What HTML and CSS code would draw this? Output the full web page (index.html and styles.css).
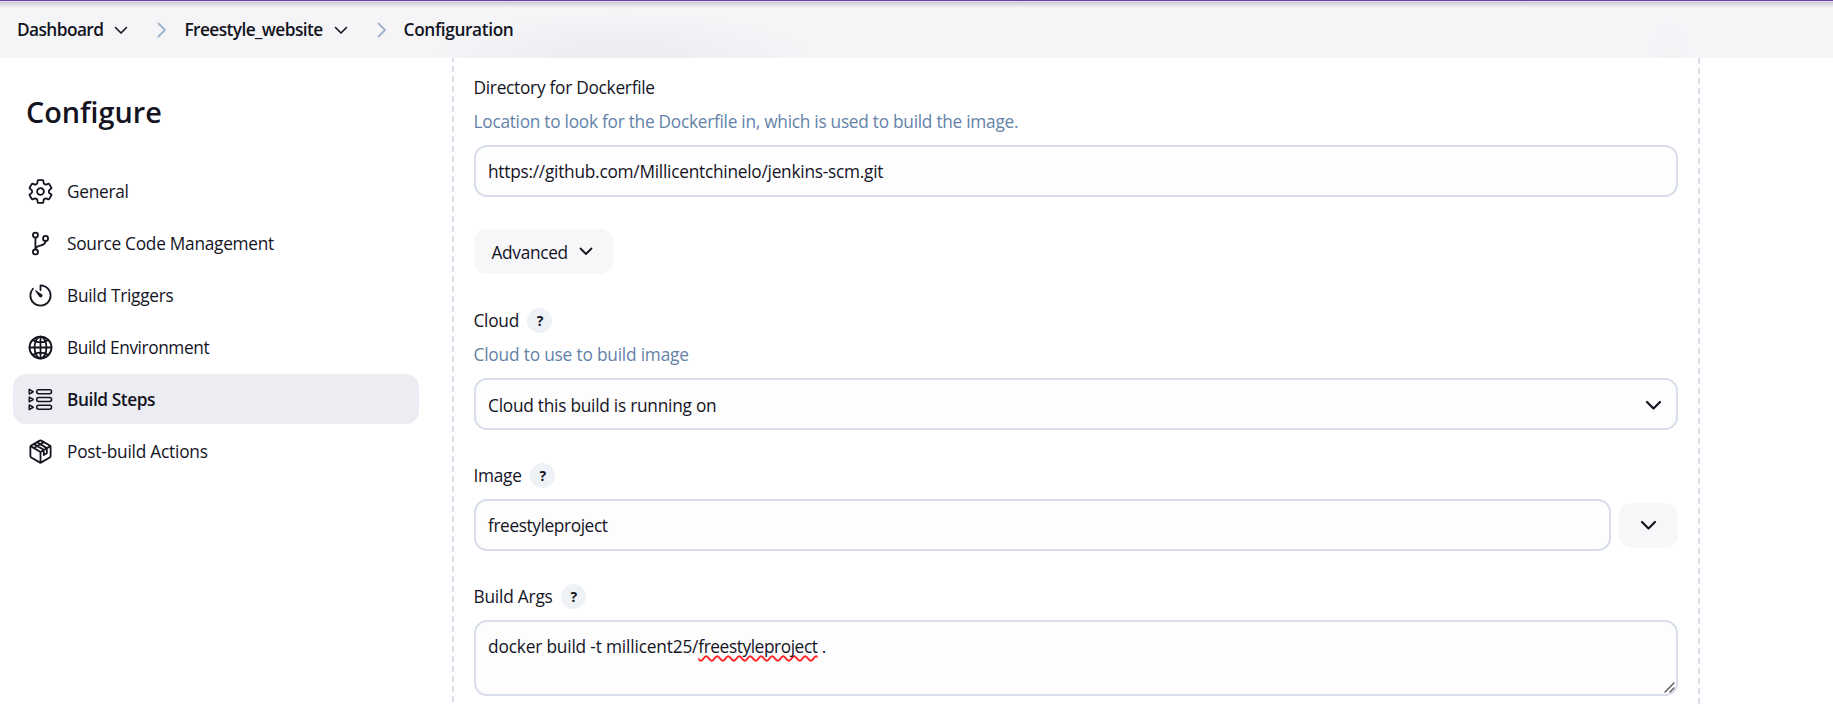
FILE: index.html
```html
<!DOCTYPE html>
<html lang="en">
<head>
<meta charset="utf-8">
<title>Freestyle_website Config</title>
<link rel="stylesheet" href="styles.css">
</head>
<body>
<header class="crumbs">
  <span class="crumb">Dashboard</span>
  <svg class="crumb-down" width="14" height="9" viewBox="0 0 14 9"><path d="M1.500 1.500 7 7l5.500-5.500"/></svg>
  <svg class="crumb-sep" width="10" height="16" viewBox="0 0 10 16"><path d="M1.500 1.500 8 8l-6.500 6.500"/></svg>
  <span class="crumb mid">Freestyle_website</span>
  <svg class="crumb-down" width="14" height="9" viewBox="0 0 14 9"><path d="M1.500 1.500 7 7l5.500-5.500"/></svg>
  <svg class="crumb-sep" width="10" height="16" viewBox="0 0 10 16"><path d="M1.500 1.500 8 8l-6.500 6.500"/></svg>
  <span class="crumb last">Configuration</span>
</header>
<div class="page">
  <aside class="side">
    <h1>Configure</h1>
    <nav>
      <a class="item"><svg class="ico" viewBox="0 0 512 512"><path d="M262.290 192.310a64 64 0 1057.400 57.400 64.130 64.130 0 00-57.400-57.400zM416.390 256a154.340 154.340 0 01-1.530 20.790l45.210 35.460a10.810 10.810 0 012.450 13.750l-42.770 74a10.810 10.810 0 01-13.140 4.590l-44.900-18.080a16.110 16.110 0 00-15.170 1.750A164.480 164.480 0 01325 400.800a15.940 15.940 0 00-8.820 12.140l-6.730 47.890a11.080 11.080 0 01-10.680 9.170h-85.540a11.110 11.110 0 01-10.690-8.870l-6.720-47.820a16.070 16.070 0 00-9-12.220 155.300 155.300 0 01-21.460-12.570 16 16 0 00-15.110-1.710l-44.890 18.070a10.810 10.810 0 01-13.140-4.580l-42.770-74a10.800 10.800 0 012.450-13.750l38.210-30a16.050 16.050 0 006-14.080c-.36-4.170-.58-8.330-.58-12.500s.21-8.270.58-12.350a16 16 0 00-6.070-13.940l-38.190-30A10.810 10.810 0 0149.480 186l42.770-74a10.810 10.810 0 0113.140-4.590l44.900 18.080a16.110 16.110 0 0015.170-1.750A164.480 164.480 0 01187 111.200a15.940 15.940 0 008.820-12.140l6.730-47.890A11.080 11.080 0 01213.230 42h85.540a11.110 11.110 0 0110.690 8.870l6.720 47.820a16.070 16.070 0 009 12.220 155.300 155.300 0 0121.460 12.570 16 16 0 0015.110 1.710l44.890-18.070a10.810 10.810 0 0113.140 4.580l42.770 74a10.800 10.800 0 01-2.450 13.750l-38.210 30a16.050 16.050 0 00-6.050 14.080c.33 4.140.55 8.300.55 12.470z"/></svg><span>General</span></a>
      <a class="item"><svg class="ico" viewBox="0 0 512 512"><circle cx="160" cy="96" r="48"/><circle cx="160" cy="416" r="48"/><path d="M160 368V144"/><circle cx="352" cy="160" r="48"/><path d="M352 208c0 128-192 48-192 160"/></svg><span>Source Code Management</span></a>
      <a class="item"><svg class="ico" viewBox="0 0 512 512"><path d="M112.910 128A191.850 191.850 0 0064 254c-1.180 106.350 85.650 193.800 192 194 106.200.2 192-85.830 192-192 0-104.540-83.550-189.610-187.500-192a4.360 4.360 0 00-4.500 4.370V152"/><path class="solid" d="M233.380 278.630l-79-113a8.130 8.130 0 0111.320-11.320l113 79a32.500 32.500 0 01-37.250 53.260 33.210 33.210 0 01-8.070-7.940z"/></svg><span>Build Triggers</span></a>
      <a class="item env"><svg class="ico" viewBox="0 0 512 512"><path d="M256 48C141.130 48 48 141.130 48 256s93.130 208 208 208 208-93.130 208-208S370.870 48 256 48z"/><path d="M256 48c-58.070 0-112.670 93.130-112.670 208S197.930 464 256 464s112.670-93.130 112.670-208S314.070 48 256 48z"/><path d="M117.330 117.330c38.240 27.150 86.380 43.340 138.670 43.340s100.430-16.190 138.670-43.340M394.670 394.670c-38.240-27.150-86.380-43.340-138.670-43.340s-100.430 16.190-138.670 43.340M256 48v416M464 256H48"/></svg><span>Build Environment</span></a>
      <a class="item active"><svg class="ico steps" viewBox="0 0 512 512"><rect x="184" y="72" width="282" height="74" rx="36"/><rect x="184" y="219" width="282" height="74" rx="36"/><rect x="184" y="366" width="282" height="74" rx="36"/><path d="M42 64v90l76-45zM42 211v90l76-45zM42 358v90l76-45z"/></svg><span>Build Steps</span></a>
      <a class="item post"><svg class="ico" viewBox="0 0 512 512"><path d="M448 341.370V170.610A32 32 0 00432.110 143l-152-88.460a47.940 47.940 0 00-48.240 0L79.890 143A32 32 0 0064 170.610v170.760A32 32 0 0079.890 369l152 88.460a48 48 0 0048.240 0l152-88.460A32 32 0 00448 341.370z"/><path d="M69 154l187 110 187-110M256 464V264M132 116l186 108v98l58-32v-98L192 80M132 188l124-72 64-38"/></svg><span>Post-build Actions</span></a>
    </nav>
  </aside>
  <main class="panel">
    <div class="label"><span>Directory for Dockerfile</span></div>
    <div class="desc">Location to look for the Dockerfile in, which is used to build the image.</div>
    <div class="field"><span>https://github.com/Millicentchinelo/jenkins-scm.git</span></div>
    <button class="adv"><span>Advanced</span><svg width="14" height="9" viewBox="0 0 14 9"><path d="M1.500 1.500 7 7l5.500-5.500"/></svg></button>
    <div class="label"><span>Cloud</span><i class="help">?</i></div>
    <div class="desc short">Cloud to use to build image</div>
    <div class="field select"><span>Cloud this build is running on</span><svg class="down" width="17" height="11" viewBox="0 0 17 11"><path d="M2 2l6.500 6.500L15 2"/></svg></div>
    <div class="label image"><span>Image</span><i class="help">?</i></div>
    <div class="combo">
      <div class="field name"><span>freestyleproject</span></div>
      <button class="more"><svg class="down" width="17" height="11" viewBox="0 0 17 11"><path d="M2 2l6.500 6.500L15 2"/></svg></button>
    </div>
    <div class="label args"><span>Build Args</span><i class="help">?</i></div>
    <div class="field area"><span>docker build -t millicent25/<span class="typo">freestyleproject</span> .</span>
      <svg class="grip" width="11" height="11" viewBox="0 0 11 11"><path d="M1 10l9-9M6 10l4-4"/></svg>
    </div>
  </main>
</div>
</body>
</html>
```
FILE: styles.css
```css
* { box-sizing: border-box; }
body {
  margin: 0;
  height: 705px;
  overflow: hidden;
  background: #fff;
  color: #14141f;
  font: 17.3px/24px "Open Sans", "Noto Sans", sans-serif;
  letter-spacing: -0.27px;
}
svg { flex: none; fill: none; stroke: currentColor; stroke-linecap: round; stroke-linejoin: round; }
.crumbs {
  height: 58px;
  padding: 2px 0 0 17px;
  display: flex;
  align-items: center;
  font-weight: 600;
  letter-spacing: -0.58px;
  background:
    linear-gradient(#6b3fa3 0 1px, #e8dff3 1px 2px, #c4c4c9 2px, #dcdce0 4px, rgba(245,245,248,0) 8px),
    radial-gradient(ellipse 190px 44px at 620px 58px, #ededf1 20%, rgba(245,245,248,0)),
    radial-gradient(ellipse 22px 40px at 1670px 58px, #f5f2f6 40%, rgba(245,245,248,0)),
    #f5f5f8;
}
.crumb-down { stroke-width: 1.6; margin-left: 11px; }
.crumb-sep { color: #9fb3cc; stroke-width: 1.8; margin: 0 17px 0 29px; }
.crumb.last { letter-spacing: -0.38px; }
.page { display: flex; height: 647px; }
.side { width: 452px; padding: 31px 33px 0 13px; }
h1 { margin: 0 0 31px 13px; font-size: 28.8px; line-height: 46px; font-weight: 600; letter-spacing: 0; }
.item { display: flex; align-items: center; height: 50px; margin-bottom: 2px; padding: 2px 0 0 14px; gap: 13px; border-radius: 13px; }
.env, .active { letter-spacing: -0.42px; }
.post { letter-spacing: -0.22px; }
.active { background: #ecedf3; font-weight: 600; }
.ico { width: 27px; height: 27px; stroke-width: 34; margin-top: -2px; }
.ico .solid { fill: currentColor; stroke: none; }
.ico.steps { stroke-width: 28; }
.panel {
  width: 1248px;
  padding: 17px 22px 0 21.5px;
  background:
    repeating-linear-gradient(#d9dfea 0 4px, transparent 4px 8px, #d9dfea 8px 10px) 0 0 / 2px 100% no-repeat,
    repeating-linear-gradient(#d9dfea 0 6px, transparent 6px 10px) 100% 0 / 2px 100% no-repeat;
}
.label { display: flex; align-items: center; height: 25px; }
.desc { color: #6482a8; height: 25px; margin: 10px 0 10px; }
.desc.short { letter-spacing: -0.19px; }
.field {
  height: 52px;
  border: 2px solid #d7dde9;
  border-radius: 13px;
  background: #fdfdfe;
  padding: 2px 14px 0 12.5px;
  display: flex;
  align-items: center;
  letter-spacing: -0.25px;
}
button { border: 0; font: inherit; letter-spacing: -0.33px; color: inherit; background: #f7f7fa; border-radius: 13px; display: flex; align-items: center; height: 45px; }
.adv { margin: 32px 0 34px; width: 139px; padding: 2px 0 0 18px; gap: 11px; }
.adv svg { stroke-width: 1.8; margin-top: -3px; }
.down { stroke-width: 2.2; margin-top: -1px; }
.select { justify-content: space-between; padding-top: 3px; letter-spacing: -0.25px; }
.name { letter-spacing: -0.4px; }
.more .down { margin-top: 1px; }
.help { width: 25px; height: 25px; margin-left: 8.5px; border-radius: 50%; background: #eef1f5; font: 700 14px/25px "Open Sans", sans-serif; text-align: center; }
.image { margin: 33px 0 11px; }
.image span { padding-top: 1px; }
.combo { display: flex; align-items: center; gap: 8px; }
.combo .field { flex: 1; }
.more { width: 59px; justify-content: center; padding: 0; }
.args { margin: 33px 0 11px; letter-spacing: -0.2px; }
.area { height: 76px; align-items: flex-start; padding-top: 13px; position: relative; letter-spacing: -0.17px; }
.typo { letter-spacing: -0.42px; text-decoration: underline wavy #f22 1.5px; text-underline-offset: 2px; text-decoration-skip-ink: none; }
.grip { position: absolute; right: 1px; bottom: 1px; color: #555; stroke-width: 1.4; }
```
